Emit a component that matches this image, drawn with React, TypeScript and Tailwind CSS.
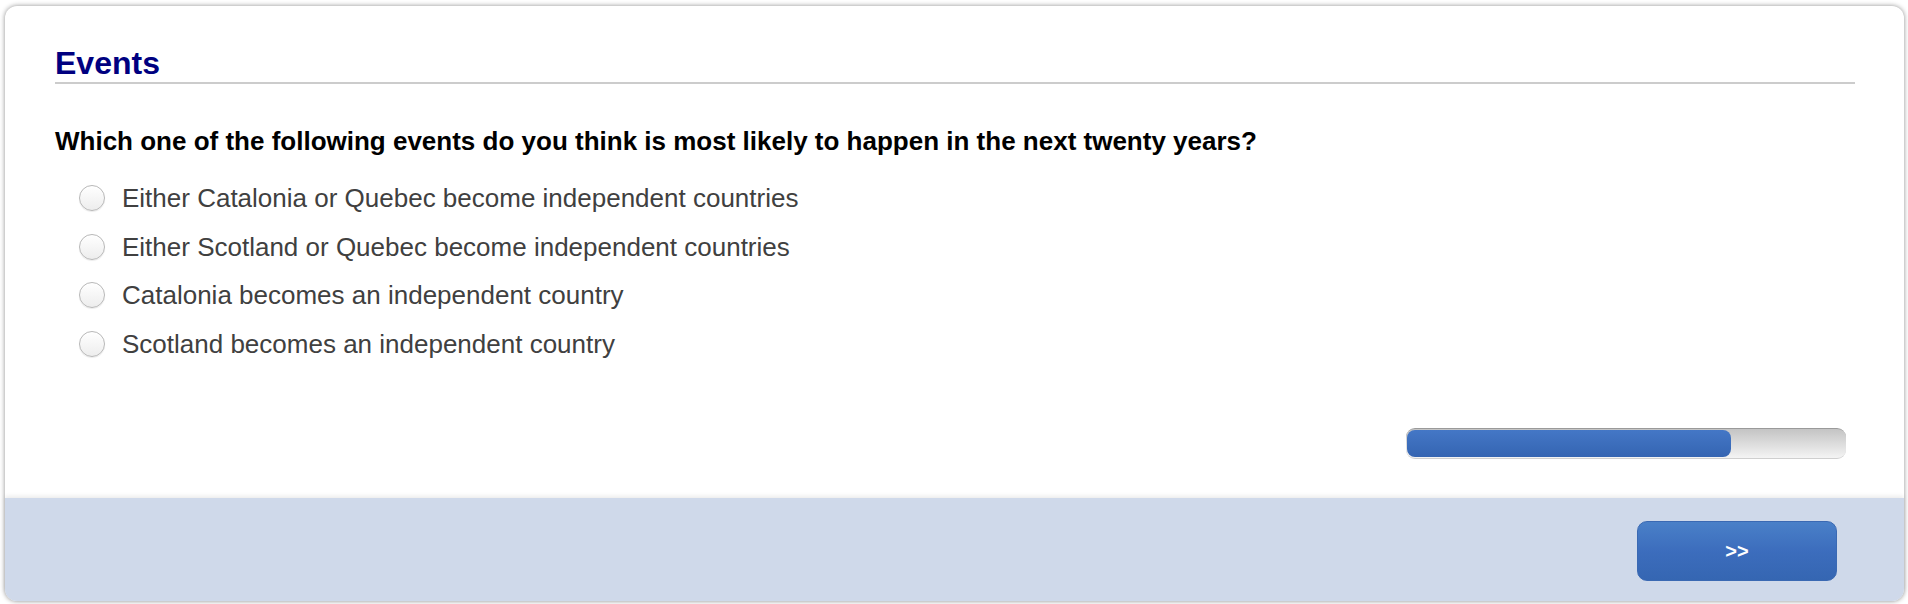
import React from 'react';

const options: string[] = [
  'Either Catalonia or Quebec become independent countries',
  'Either Scotland or Quebec become independent countries',
  'Catalonia becomes an independent country',
  'Scotland becomes an independent country',
];

const progress = 0.74;

const App: React.FC = () => {
  return (
    <div
      className="h-[604px] w-[1908px] overflow-hidden bg-white pt-[6px] pl-[5px] pr-[4px]"
      style={{ fontFamily: '"Liberation Sans", Arial, Helvetica, sans-serif' }}
    >
      <div className="flex h-[595px] flex-col rounded-[12px] bg-white shadow-[0_0_5px_rgba(0,0,0,0.45)]">
        <div className="flex flex-1 flex-col pt-[40px] pl-[50px] pr-[49px]">
          <h1 className="border-b-2 border-[#cccccc] pb-[2px] text-[32px] font-bold leading-[34px] text-[#000080]">
            Events
          </h1>

          <p className="mt-[42px] text-[26px] font-bold leading-[30px] text-black">
            Which one of the following events do you think is most likely to happen in the next twenty years?
          </p>

          <div className="mt-[18px] flex flex-col">
            {options.map((label, index) => (
              <label key={index} className="flex h-[48.6px] items-center">
                <span className="ml-[24px] h-[26px] w-[26px] shrink-0 rounded-full border border-[#b8b8b8] bg-gradient-to-b from-white to-[#ededed] shadow-[inset_0_1px_1px_rgba(255,255,255,0.9),0_1px_1px_rgba(0,0,0,0.08)]" />
                <span className="ml-[17px] text-[26px] leading-[48px] text-[#404040]">{label}</span>
              </label>
            ))}
          </div>

          <div className="mt-[60px] flex justify-end pr-[9px]">
            <div className="h-[31px] w-[440px] rounded-[9px] border-t border-[#9a9a9a] border-b border-b-[#cfcfcf] bg-gradient-to-b from-[#c4c4c4] to-[#f4f4f4] p-px">
              <div
                className="h-full rounded-[8px] bg-gradient-to-b from-[#4477c6] to-[#3565b2]"
                style={{ width: `${progress * 100}%` }}
              />
            </div>
          </div>
        </div>

        <div className="flex h-[103px] shrink-0 items-center justify-end rounded-b-[12px] bg-[#cfd9ea] pr-[67px] pt-[3px] shadow-[0_-2px_4px_rgba(0,0,0,0.08)]">
          <button className="h-[60px] w-[200px] rounded-[10px] border border-[#3a69b3] bg-gradient-to-b from-[#4a80c8] via-[#3c6dbd] to-[#3566b2] text-[20px] font-bold text-white">
            &gt;&gt;
          </button>
        </div>
      </div>
    </div>
  );
};

export default App;
